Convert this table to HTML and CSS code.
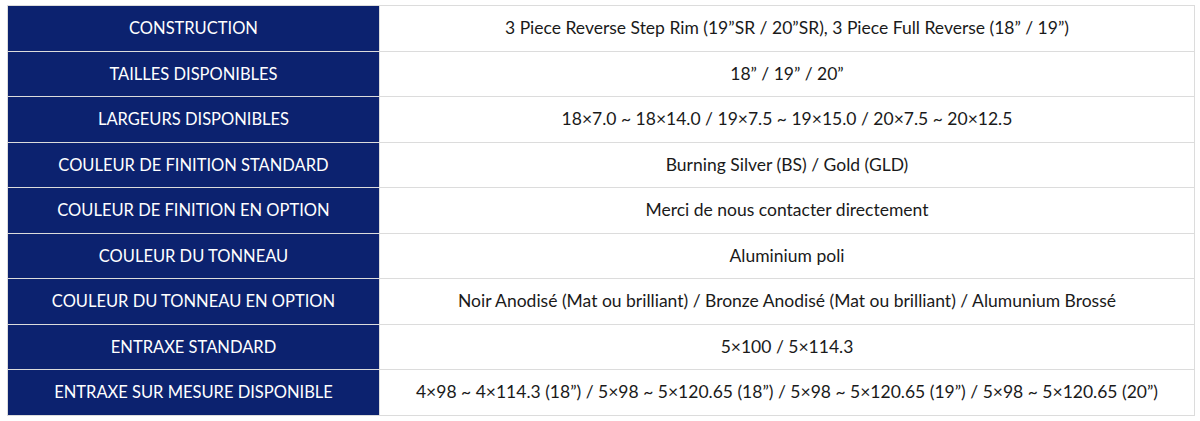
FILE: index.html
```html
<!DOCTYPE html>
<html lang="fr">
<head>
<meta charset="utf-8">
<link rel="stylesheet" href="styles.css">
</head>
<body>
<table class="spec">
  <tr><th>CONSTRUCTION</th><td>3 Piece Reverse Step Rim (19”SR / 20”SR), 3 Piece Full Reverse (18” / 19”)</td></tr>
  <tr><th>TAILLES DISPONIBLES</th><td>18” / 19” / 20”</td></tr>
  <tr><th>LARGEURS DISPONIBLES</th><td>18×7.0 ~ 18×14.0 / 19×7.5 ~ 19×15.0 / 20×7.5 ~ 20×12.5</td></tr>
  <tr><th>COULEUR DE FINITION STANDARD</th><td>Burning Silver (BS) / Gold (GLD)</td></tr>
  <tr><th>COULEUR DE FINITION EN OPTION</th><td>Merci de nous contacter directement</td></tr>
  <tr><th>COULEUR DU TONNEAU</th><td>Aluminium poli</td></tr>
  <tr><th>COULEUR DU TONNEAU EN OPTION</th><td>Noir Anodisé (Mat ou brilliant) / Bronze Anodisé (Mat ou brilliant) / Alumunium Brossé</td></tr>
  <tr><th>ENTRAXE STANDARD</th><td>5×100 / 5×114.3</td></tr>
  <tr><th>ENTRAXE SUR MESURE DISPONIBLE</th><td>4×98 ~ 4×114.3 (18”) / 5×98 ~ 5×120.65 (18”) / 5×98 ~ 5×120.65 (19”) / 5×98 ~ 5×120.65 (20”)</td></tr>
</table>
</body>
</html>
```

FILE: styles.css
```css
html, body {
  margin: 0;
  padding: 0;
  background: #ffffff;
}
body {
  padding: 5px 0 0 7px;
  font-family: "Lato", "Open Sans", sans-serif;
}
.spec {
  border-collapse: collapse;
  width: 1188px;
}
.spec th, .spec td {
  height: 44.5px;
  padding: 0 8px;
  text-align: center;
  vertical-align: middle;
  border: 1px solid #dcdcdc;
  line-height: 20px;
}
.spec th {
  width: 355px;
  background: #0c226f;
  color: #ffffff;
  font-weight: 400;
  font-size: 16.5px;
}
.spec td {
  color: #1a1a1a;
  font-size: 17.5px;
}
```
